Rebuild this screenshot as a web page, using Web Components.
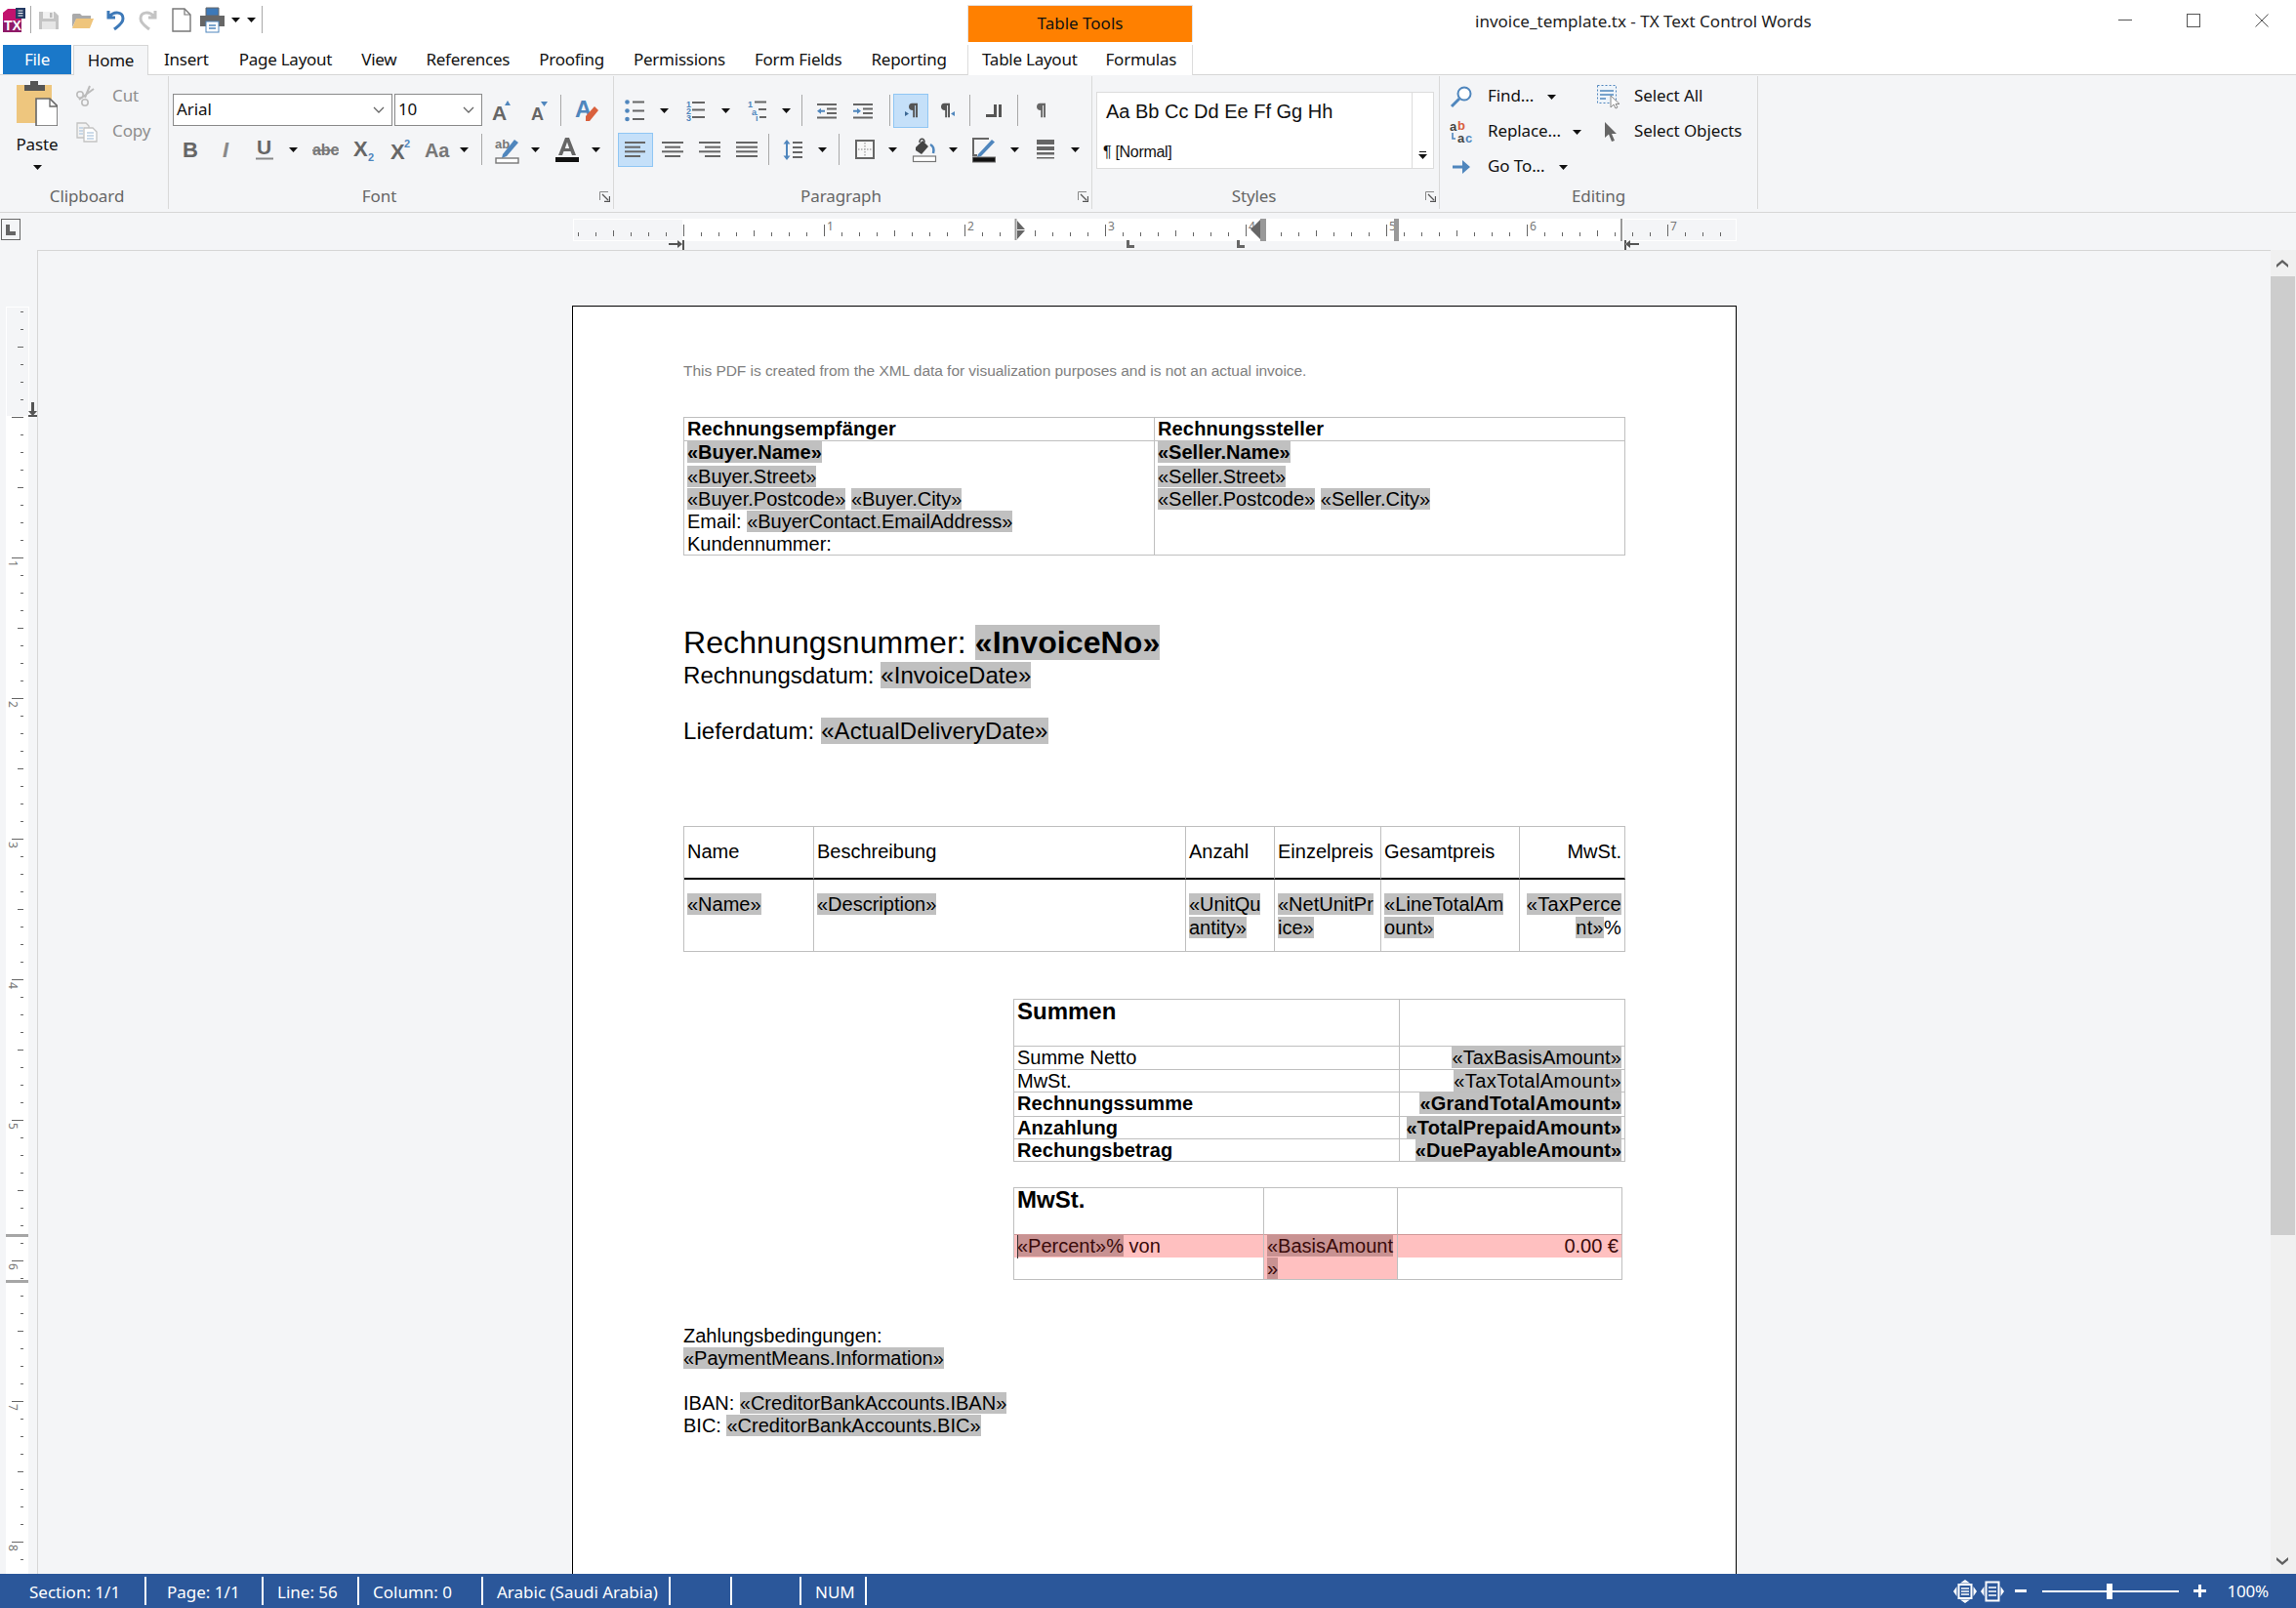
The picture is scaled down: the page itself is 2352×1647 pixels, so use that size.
<!DOCTYPE html>
<html lang="en"><head><meta charset="utf-8"><title>invoice_template.tx - TX Text Control Words</title>
<style>html,body{margin:0;padding:0;background:#f4f5f7;overflow:hidden}</style></head>
<body>
<tx-app>
  <tx-titlebar>
    <tx-btn w="29" i="logo"></tx-btn><tx-sep w="4" h="28"></tx-sep>
    <tx-btn w="34" i="save"></tx-btn><tx-btn w="36" i="open"></tx-btn><tx-btn w="30" i="undo"></tx-btn><tx-btn w="38" i="redo"></tx-btn><tx-btn w="30" i="newdoc"></tx-btn><tx-btn w="33" i="print"></tx-btn><tx-btn w="14" i="caret"></tx-btn><tx-btn w="18" i="caret"></tx-btn><tx-sep w="4" h="28"></tx-sep>
  </tx-titlebar>
  <tx-tabs>
    <tx-row w="991" style="align-items:flex-start">
    <tx-tab kind="file" w="70" ml="3">File</tx-tab><tx-tab kind="active" w="77" ml="2">Home</tx-tab>
    <tx-tab pad="16">Insert</tx-tab><tx-tab pad="15">Page Layout</tx-tab><tx-tab pad="15">View</tx-tab><tx-tab pad="15">References</tx-tab><tx-tab pad="15">Proofing</tx-tab><tx-tab pad="15">Permissions</tx-tab><tx-tab pad="15">Form Fields</tx-tab><tx-tab pad="15">Reporting</tx-tab>
    </tx-row>
    <tx-context><tx-tab pad="14">Table Layout</tx-tab><tx-tab pad="15">Formulas</tx-tab></tx-context>
  </tx-tabs>
  <tx-ribbon>
    <tx-group w="173" label="Clipboard" lpl="6">
      <tx-row style="align-items:flex-start">
        <tx-paste></tx-paste>
        <tx-col top="3">
          <tx-row h="36"><tx-btn w="26" i="cut"></tx-btn><tx-label pl="13" muted>Cut</tx-label></tx-row>
          <tx-row h="36"><tx-btn w="26" i="copy"></tx-btn><tx-label pl="13" muted>Copy</tx-label></tx-row>
        </tx-col>
      </tx-row>
    </tx-group>
    <tx-group w="456" label="Font" launcher>
      <tx-col top="15">
        <tx-row h="40"><tx-combo w="225" ml="4">Arial</tx-combo><tx-combo w="90" ml="2">10</tx-combo><tx-btn w="40" i="grow"></tx-btn><tx-btn w="38" i="shrink"></tx-btn><tx-sep w="4"></tx-sep><tx-btn w="50" i="clearfmt"></tx-btn></tx-row>
        <tx-row h="40"><tx-btn w="44" i="bold"></tx-btn><tx-btn w="30" i="italic"></tx-btn><tx-btn w="48" i="under"></tx-btn><tx-btn w="10" i="caret"></tx-btn><tx-btn w="56" i="strike"></tx-btn><tx-btn w="24" i="sub"></tx-btn><tx-btn w="50" i="sup"></tx-btn><tx-btn w="24" i="case"></tx-btn><tx-btn w="32" i="caret"></tx-btn><tx-sep w="4"></tx-sep><tx-gap w="8"></tx-gap><tx-btn w="32" i="hilite"></tx-btn><tx-btn w="26" i="caret"></tx-btn><tx-btn w="40" i="fcolor"></tx-btn><tx-btn w="18" i="caret"></tx-btn></tx-row>
      </tx-col>
    </tx-group>
    <tx-group w="490" label="Paragraph" launcher>
      <tx-col top="15">
        <tx-row h="40"><tx-btn w="42" i="bullets"></tx-btn><tx-btn w="18" i="caret"></tx-btn><tx-btn w="47" i="numbers"></tx-btn><tx-btn w="14" i="caret"></tx-btn><tx-btn w="50" i="multi"></tx-btn><tx-btn w="10" i="caret"></tx-btn><tx-sep w="23"></tx-sep><tx-btn w="28" i="outdent"></tx-btn><tx-btn w="46" i="indent"></tx-btn><tx-sep w="8"></tx-sep><tx-btn w="36" i="ltr" pressed></tx-btn><tx-btn w="40" i="rtl"></tx-btn><tx-sep w="4"></tx-sep><tx-btn w="46" i="tcol"></tx-btn><tx-sep w="2"></tx-sep><tx-btn w="48" i="pil"></tx-btn></tx-row>
        <tx-row h="40"><tx-gap w="4"></tx-gap><tx-btn w="36" i="aleft" pressed></tx-btn><tx-btn w="40" i="acenter"></tx-btn><tx-btn w="36" i="aright"></tx-btn><tx-btn w="40" i="ajust"></tx-btn><tx-sep w="4"></tx-sep><tx-btn w="47" i="spacing"></tx-btn><tx-btn w="12" i="caret"></tx-btn><tx-sep w="22"></tx-sep><tx-btn w="32" i="borders"></tx-btn><tx-btn w="24" i="caret"></tx-btn><tx-btn w="42" i="paint"></tx-btn><tx-btn w="16" i="caret"></tx-btn><tx-btn w="48" i="pen"></tx-btn><tx-btn w="14" i="caret"></tx-btn><tx-btn w="50" i="shade"></tx-btn><tx-btn w="10" i="caret"></tx-btn></tx-row>
      </tx-col>
    </tx-group>
    <tx-group w="356" label="Styles" launcher>
      <tx-styles></tx-styles>
    </tx-group>
    <tx-group w="326" label="Editing">
      <tx-col top="3" left="2">
        <tx-row h="36"><tx-btn w="40" i="find"></tx-btn><tx-label pl="7" w="55">Find...</tx-label><tx-btn w="34" i="caret"></tx-btn><tx-gap w="21"></tx-gap><tx-btn w="40" i="selall"></tx-btn><tx-label pl="7">Select All</tx-label></tx-row>
        <tx-row h="36"><tx-btn w="40" i="replace"></tx-btn><tx-label pl="7" w="81">Replace...</tx-label><tx-btn w="34" i="caret"></tx-btn><tx-btn w="35" i="pointer"></tx-btn><tx-label pl="7">Select Objects</tx-label></tx-row>
        <tx-row h="36"><tx-btn w="40" i="goto"></tx-btn><tx-label pl="7" w="67">Go To...</tx-label><tx-btn w="34" i="caret"></tx-btn></tx-row>
      </tx-col>
    </tx-group>
  </tx-ribbon>
  <tx-hruler></tx-hruler>
  <tx-editor>
    <tx-vruler slot="ruler"></tx-vruler>
    <tx-page>
      <tx-p color="#808080" fs="15.5" ls="-0.04">This PDF is created from the XML data for visualization purposes and is not an actual invoice.</tx-p>
      <tx-table top="36" cols="482 482" rows="24 117">
        <tx-cell b ls="0.15">Rechnungsempfänger</tx-cell><tx-cell b ls="0.15">Rechnungssteller</tx-cell>
        <tx-cell><tx-ln h="25"><b><tx-field>«Buyer.Name»</tx-field></b></tx-ln><tx-field>«Buyer.Street»</tx-field><br><tx-field>«Buyer.Postcode»</tx-field> <tx-field>«Buyer.City»</tx-field><br>Email: <tx-field>«BuyerContact.EmailAddress»</tx-field><br>Kundennummer:</tx-cell>
        <tx-cell><tx-ln h="25"><b><tx-field>«Seller.Name»</tx-field></b></tx-ln><tx-field>«Seller.Street»</tx-field><br><tx-field>«Seller.Postcode»</tx-field> <tx-field>«Seller.City»</tx-field></tx-cell>
      </tx-table>
      <tx-p top="71" fs="32" lh="37" ls="0.1">Rechnungsnummer: <b><tx-field>«InvoiceNo»</tx-field></b></tx-p>
      <tx-p top="1" fs="24" lh="28" ls="0.05">Rechnungsdatum: <tx-field>«InvoiceDate»</tx-field></tx-p>
      <tx-p top="29" fs="24" lh="28" ls="0.08">Lieferdatum: <tx-field>«ActualDeliveryDate»</tx-field></tx-p>
      <tx-table top="83" cols="133 381 91 109 142 108" rows="54 74">
        <tx-cell heavy pt="14">Name</tx-cell><tx-cell heavy pt="14">Beschreibung</tx-cell><tx-cell heavy pt="14">Anzahl</tx-cell><tx-cell heavy pt="14">Einzelpreis</tx-cell><tx-cell heavy pt="14">Gesamtpreis</tx-cell><tx-cell heavy pt="14" right>MwSt.</tx-cell>
        <tx-cell pt="14"><tx-field>«Name»</tx-field></tx-cell><tx-cell pt="14"><tx-field>«Description»</tx-field></tx-cell><tx-cell pt="13" lh="24"><tx-field>«UnitQu</tx-field><br><tx-field>antity»</tx-field></tx-cell><tx-cell pt="13" lh="24"><tx-field>«NetUnitPr</tx-field><br><tx-field>ice»</tx-field></tx-cell><tx-cell pt="13" lh="24" ls="0.1"><tx-field>«LineTotalAm</tx-field><br><tx-field>ount»</tx-field></tx-cell><tx-cell pt="13" lh="24" right ls="0.3"><tx-field>«TaxPerce</tx-field><br><tx-field>nt»</tx-field>%</tx-cell>
      </tx-table>
      <tx-table top="48" ml="338" cols="395 231" rows="48 24 23 25 23 23">
        <tx-cell><b style="font-size:24px">Summen</b></tx-cell><tx-cell></tx-cell>
        <tx-cell>Summe Netto</tx-cell><tx-cell right ls="0.15"><tx-field>«TaxBasisAmount»</tx-field></tx-cell>
        <tx-cell>MwSt.</tx-cell><tx-cell right ls="0.45"><tx-field>«TaxTotalAmount»</tx-field></tx-cell>
        <tx-cell b ls="0.1">Rechnungssumme</tx-cell><tx-cell right b ls="0.2"><tx-field>«GrandTotalAmount»</tx-field></tx-cell>
        <tx-cell b ls="0.1">Anzahlung</tx-cell><tx-cell right b ls="0.15"><tx-field>«TotalPrepaidAmount»</tx-field></tx-cell>
        <tx-cell b ls="0.1">Rechungsbetrag</tx-cell><tx-cell right b><tx-field>«DuePayableAmount»</tx-field></tx-cell>
      </tx-table>
      <tx-table top="26" ml="338" cols="256 137 230" rows="48 46">
        <tx-cell><b style="font-size:24px">MwSt.</b></tx-cell><tx-cell></tx-cell><tx-cell></tx-cell>
        <tx-cell red><tx-redline cursor><tx-field dark>«Percent»%</tx-field> von</tx-redline></tx-cell>
        <tx-cell red full><tx-field dark>«BasisAmount</tx-field><br><tx-field dark>»</tx-field></tx-cell>
        <tx-cell red><tx-redline right>0.00 €</tx-redline></tx-cell>
      </tx-table>
      <tx-p top="46">Zahlungsbedingungen:</tx-p>
      <tx-p><tx-field>«PaymentMeans.Information»</tx-field></tx-p>
      <tx-p top="23">IBAN: <tx-field>«CreditorBankAccounts.IBAN»</tx-field></tx-p>
      <tx-p>BIC: <tx-field>«CreditorBankAccounts.BIC»</tx-field></tx-p>
    </tx-page>
    <tx-scroll slot="scroll"></tx-scroll>
  </tx-editor>
  <tx-status>
    <tx-sitem w="150" pl="30">Section: 1/1</tx-sitem><tx-sitem w="120" pl="21">Page: 1/1</tx-sitem><tx-sitem w="98" pl="14">Line: 56</tx-sitem><tx-sitem w="127" pl="14">Column: 0</tx-sitem><tx-sitem w="192" pl="14">Arabic (Saudi Arabia)</tx-sitem><tx-sitem w="63"></tx-sitem><tx-sitem w="71"></tx-sitem><tx-sitem w="67" pl="14">NUM</tx-sitem>
    <tx-zoombar></tx-zoombar>
  </tx-status>
</tx-app>
<script>
const g='#666',bl='#4f86bd',F='font-family="Liberation Sans,sans-serif"';
const ln=(a,c=g,s=2)=>a.map(([x1,x2,y])=>`<path d="M${x1} ${y}H${x2}" stroke="${c}" stroke-width="${s}" fill="none"/>`).join('');
const pilPath=(c)=>`<path d="M5 1H14V21H11V4H9.500V21H6.500V11C2 11 0 9 0 6S2 1 5 1Z" fill="${c}"/>`;
const pilS=(x,y,w,h,c='#555')=>`<svg x="${x}" y="${y}" width="${w}" height="${h}" viewBox="0 0 14 22" preserveAspectRatio="none">${pilPath(c)}</svg>`;
const I={
caret:[9,5,'<path d="M0 0h9L4.5 5z" fill="#111"/>'],
logo:[24,25,`<path d="M0 5L5 1H19V25H0Z" fill="#c2136e"/><path d="M0 13H19V25H0Z" fill="#8f1a68"/><rect x="13" y="0" width="10" height="11" fill="#243a63"/><path d="M15.500 3h5M15.500 5.500h5M15.500 8h5" stroke="#fff" stroke-width="1.100"/><text x="1" y="23" font-size="14" font-weight="700" fill="#fff" ${F}>TX</text>`],
save:[20,19,'<path d="M0 1H16L20 5V19H0Z" fill="#c4c4c4"/><rect x="4" y="1" width="11" height="7" fill="#f1f1f1"/><rect x="3" y="11" width="14" height="8" fill="#e6e6e6"/><rect x="11" y="2" width="2.500" height="5" fill="#bbb"/>'],
open:[22,17,'<path d="M1 2H8L10 4H19V8H4L0 16V3Z" fill="#aaa"/><path d="M4 7H22L18 17H0Z" fill="#efc57c"/>'],
undo:[20,22,'<path d="M3 2V9H10M4 8C9 2 18 3 18 10C18 15 13 18 9 21" fill="none" stroke="#3d79b8" stroke-width="3"/>'],
redo:[20,22,'<path d="M17 2V9H10M16 8C11 2 2 3 2 10C2 15 7 18 11 21" fill="none" stroke="#c4c4c4" stroke-width="3"/>'],
newdoc:[20,25,'<path d="M1 1H13L19 7V24H1Z" fill="#fff" stroke="#777" stroke-width="1.400"/><path d="M13 1V7H19" fill="none" stroke="#777" stroke-width="1.200"/>'],
print:[25,26,`<path d="M6 1H19V9H6Z" fill="#3d79b8" stroke="#666"/><rect x="0" y="9" width="25" height="11" fill="#666"/><rect x="6" y="15" width="13" height="11" fill="#fff" stroke="#4f86bd"/><path d="M9 19h7M9 22h7" stroke="#4f86bd" stroke-width="1.500"/>`],
cut:[22,22,'<path d="M14 0L9 12M18 3L3 14" stroke="#bbb" stroke-width="2" fill="none"/><circle cx="4" cy="9" r="3.200" fill="none" stroke="#bbb" stroke-width="1.600"/><circle cx="9" cy="17" r="3.200" fill="none" stroke="#bbb" stroke-width="1.600"/>'],
copy:[22,21,'<path d="M1 1H10L13 4V16H1Z" fill="#f3f3f3" stroke="#c2c2c2" stroke-width="1.300"/><path d="M8 6H17L21 10V20H8Z" fill="#fff" stroke="#c2c2c2" stroke-width="1.300"/><path d="M11 11h7M11 14h7M11 17h7M3 6h4M3 9h4M3 12h4" stroke="#bcd0e4" stroke-width="1.300"/>'],
paste:[42,46,'<rect x="0" y="4" width="36" height="39" fill="#eec67e"/><path d="M8 4H14V0H22V4H29V10H8Z" fill="#555"/><path d="M20 18H34L42 26V46H20Z" fill="#fff" stroke="#666" stroke-width="1.600"/><path d="M34 18V26H42" fill="none" stroke="#666" stroke-width="1.300"/>'],
grow:[20,20,`<text x="0" y="20" font-size="21" font-weight="700" fill="#666" ${F}>A</text><path d="M13 5L16 0L19 5Z" fill="${bl}"/>`],
shrink:[18,20,`<text x="0" y="20" font-size="18" font-weight="700" fill="#666" ${F}>A</text><path d="M10 1H17L13.500 6Z" fill="${bl}"/>`],
clearfmt:[24,26,`<text x="0" y="20" font-size="24" font-weight="700" fill="#4f86bd" ${F}>A</text><path d="M11 19L20 9L24 13L15 24H11Z" fill="#d9603d"/>`],
bold:[16,18,`<text x="0" y="17" font-size="22" font-weight="700" fill="#666" ${F}>B</text>`],
italic:[9,18,`<text x="0" y="17" font-size="22" font-weight="700" font-style="italic" fill="#888" ${F}>I</text>`],
under:[18,22,`<text x="1" y="16" font-size="21" font-weight="700" fill="#666" ${F}>U</text><path d="M0 20.500H18" stroke="#888" stroke-width="2"/>`],
strike:[27,14,`<text x="0" y="13" font-size="16" font-weight="700" fill="#777" ${F}>abc</text><path d="M0 8H27" stroke="#777" stroke-width="1.600"/>`],
sub:[22,24,`<text x="0" y="19" font-size="22" font-weight="700" fill="#666" ${F}>X</text><text x="15" y="24" font-size="11" font-weight="700" fill="${bl}" ${F}>2</text>`],
sup:[20,22,`<text x="0" y="21" font-size="22" font-weight="700" fill="#666" ${F}>X</text><text x="14" y="9" font-size="11" font-weight="700" fill="${bl}" ${F}>2</text>`],
case:[24,16,`<text x="0" y="16" font-size="20" font-weight="700" fill="#777" ${F}>Aa</text>`],
hilite:[25,28,`<text x="0" y="13" font-size="13" font-weight="700" fill="#777" ${F}>ab</text><path d="M8 19L20 4L24 7L12 21L7 23Z" fill="#4f86bd"/><rect x="1" y="23" width="23" height="5" fill="#fff" stroke="#777" stroke-width="1.400"/>`],
fcolor:[24,26,`<path d="M3 19L10 1H14L21 19H17L15.500 15H8.500L7 19ZM9.800 12H14.200L12 5.500Z" fill="#666"/><rect x="0" y="21" width="24" height="5" fill="#111"/>`],
bullets:[20,22,`<circle cx="2.500" cy="2.500" r="2.300" fill="${bl}"/><circle cx="2.500" cy="11.500" r="2.300" fill="${bl}"/><circle cx="2.500" cy="20" r="2.300" fill="${bl}"/>`+ln([[8,20,2.5],[8,20,11.5],[8,20,20]])],
numbers:[19,22,`<text x="0" y="8" font-size="9" font-weight="700" fill="${bl}" ${F}>1</text><text x="0" y="15" font-size="9" font-weight="700" fill="${bl}" ${F}>2</text><text x="0" y="22" font-size="9" font-weight="700" fill="${bl}" ${F}>3</text>`+ln([[6,19,3],[6,19,10.5],[6,19,18]])],
multi:[19,22,`<text x="0" y="8" font-size="9" font-weight="700" fill="${bl}" ${F}>1</text><text x="4" y="15.500" font-size="9" font-weight="700" fill="${bl}" ${F}>a</text><text x="8" y="22" font-size="9" font-weight="700" fill="${bl}" ${F}>i</text>`+ln([[7,19,2.5],[11,19,10],[12,19,18]])],
outdent:[20,15,ln([[0,20,1],[10,20,5.5],[10,20,10],[0,20,14.5]])+`<path d="M0 7.700L4 4.700V6.700H8V8.700H4V10.700Z" fill="${bl}"/>`],
indent:[20,15,ln([[0,20,1],[10,20,5.5],[10,20,10],[0,20,14.5]])+`<path d="M8 7.700L4 4.700V6.700H0V8.700H4V10.700Z" fill="${bl}"/>`],
ltr:[13,16,pilS(4,0,9,16)+'<path d="M0 9L4 11.500L0 14Z" fill="#3c6894"/>'],
rtl:[14,16,pilS(0,0,9,16)+`<path d="M14 9V14L10 11.500Z" fill="${bl}"/>`],
tcol:[16,13,'<path d="M0 10H8V0H11V13H0ZM13 0H16V13H13Z" fill="#555"/>'],
pil:[10,16,pilS(0,0,9,16,'#666')],
aleft:[22,16,ln([[0,21,1],[0,16,5.7],[0,21,10.3],[0,16,15]])],
acenter:[22,16,ln([[0,22,1],[3,19,5.7],[0,22,10.3],[3,19,15]])],
aright:[22,16,ln([[0,22,1],[6,22,5.7],[0,22,10.3],[6,22,15]])],
ajust:[22,16,ln([[0,22,1],[0,22,5.7],[0,22,10.3],[0,22,15]])],
spacing:[19,21,`<path d="M3 0L6.500 4.500H4V16.500H6.500L3 21L-.5 16.500H2V4.500H-.5Z" fill="${bl}"/>`+ln([[9,19,3],[9,19,8],[9,19,13],[9,19,18]])],
borders:[20,20,'<rect x="1" y="1" width="18" height="18" fill="#f8f8f8" stroke="#666" stroke-width="2"/><path d="M10 3v14M3 10h14" stroke="#aaa" stroke-width="1.500" stroke-dasharray="1.500 1.500"/>'],
paint:[24,26,`<path d="M3 11L10 4L16 10L9 18L3 14Z" fill="#444"/><path d="M7 6C7 1 12 1 12 6" fill="none" stroke="#444" stroke-width="1.500"/><path d="M18 8C22 10 22 13 21 17" fill="none" stroke="${bl}" stroke-width="2.500"/><rect x=".5" y="20" width="23" height="5.500" fill="#fff" stroke="#777" stroke-width="1.200"/>`],
pen:[24,26,`<path d="M17 2H1V19H5" fill="none" stroke="#666" stroke-width="2"/><path d="M6 18L20 3L23 5.500L9 20L5 21Z" fill="#4f86bd"/><rect x=".5" y="21" width="23" height="5" fill="#111" stroke="#666"/>`],
shade:[18,20,'<rect width="18" height="5" fill="#666"/><rect y="7" width="18" height="4" fill="#666"/><rect y="13" width="18" height="2.500" fill="#666"/><rect y="18" width="18" height="1.500" fill="#666"/>'],
find:[22,22,`<circle cx="14" cy="8" r="6.500" fill="#fff" stroke="${bl}" stroke-width="2"/><path d="M9 13L1 21" stroke="${bl}" stroke-width="3"/>`],
selall:[22,25,`<rect x=".5" y=".5" width="19" height="18" fill="#eef4fa" stroke="${bl}" stroke-dasharray="2 2"/><path d="M3 6H17M3 10H17M3 14H9" stroke="${bl}" stroke-width="1.500"/><path d="M14 11V23L17 20L19 24L21 23L19 19.500H23Z" fill="#fff" stroke="#888"/>`],
replace:[24,24,`<text x="0" y="11" font-size="13" font-weight="700" fill="#444" ${F}>a</text><text x="8" y="10" font-size="13" font-weight="700" fill="#d9603d" ${F}>b</text><path d="M3 13V19H6" fill="none" stroke="${bl}" stroke-width="1.600"/><text x="8" y="23" font-size="13" font-weight="700" fill="#444" ${F}>a</text><text x="16" y="23" font-size="13" font-weight="700" fill="${bl}" ${F}>c</text>`],
pointer:[12,20,'<path d="M0 0V16L4 12.500L7 20L10 19L7 12H12Z" fill="#666"/>'],
goto:[18,14,`<path d="M0 5.500H10V0L18 7L10 14V8.500H0Z" fill="${bl}"/>`],
};
const def=(n,css,html)=>customElements.define(n,class extends HTMLElement{constructor(){super();this.attachShadow({mode:'open'})}
 connectedCallback(){this.shadowRoot.innerHTML=`<style>${css}</style>`+(typeof html==='function'?html(this):html);}});
const px=(el,a,p)=>{if(el.hasAttribute(a))el.style[p]=el.getAttribute(a)+'px'};

def('tx-app',`:host{display:flex;flex-direction:column;width:2352px;height:1647px;overflow:hidden;background:#f4f5f7;font:17px/1.2 "Noto Sans",sans-serif;letter-spacing:-.1px;color:#111}`,`<slot></slot>`);
def('tx-titlebar',`:host{display:grid;grid-template-columns:991px 231px 289px 1fr 210px;height:46px;background:#fff;letter-spacing:0}
.q{display:flex;align-items:center;height:40px}
.ctx{margin-top:5px;height:38px;background:#ff8000;border:1px solid #e3e3e3;border-bottom:0;box-sizing:border-box;display:flex;align-items:center;justify-content:center;color:#111}
.t{grid-column:4;padding-top:12px;color:#222;white-space:nowrap}
.w{display:flex}.w div{width:70px;height:42px;display:flex;align-items:center;justify-content:center}`,
`<div class="q"><slot></slot></div><div class="ctx">Table Tools</div><div class="t">invoice_template.tx - TX Text Control Words</div><div class="w"><div><svg width="14" height="2"><rect width="14" height="1" fill="#555"/></svg></div><div><svg width="14" height="14"><rect x=".5" y=".5" width="13" height="13" fill="none" stroke="#555"/></svg></div><div><svg width="14" height="14"><path d="M.5 .5L13.500 13.500M13.500 .5L.5 13.500" stroke="#555" fill="none"/></svg></div></div>`);
def('tx-tabs',`:host{display:flex;height:31px;background:#fff;box-sizing:border-box;border-bottom:1px solid #d6d6d6;align-items:stretch;white-space:nowrap;letter-spacing:-.25px}`,`<slot></slot>`);
def('tx-tab',`:host{display:flex;align-items:center;justify-content:center;box-sizing:border-box;height:30px;color:#111;flex:none}
:host([kind=file]){background:#1a78c9;color:#fff;height:30px}
:host([kind=active]){background:#f4f5f7;border:1px solid #d6d6d6;border-bottom:0;height:31px;padding-top:1px}`,
(e)=>{px(e,'w','width');px(e,'ml','marginLeft');if(e.hasAttribute('pad')){e.style.padding=`0 ${e.getAttribute('pad')}px`}return `<slot></slot>`});
def('tx-context',`:host{display:flex;width:231px;height:31px;box-sizing:border-box;background:#fff;border-left:1px solid #dcdcdc;border-right:1px solid #dcdcdc;flex:none}`,`<slot></slot>`);
def('tx-ribbon',`:host{display:flex;height:141px;box-sizing:border-box;border-bottom:1px solid #d6d6d6;background:#f4f5f7}`,`<slot></slot>`);
def('tx-group',`:host{display:flex;flex-direction:column;box-sizing:border-box;height:136px;margin-top:1px;border-right:1px solid #d9d9d9;flex:none}
.c{height:110px}.l{display:grid;grid-template-columns:1fr auto 1fr;height:26px;align-items:center;color:#666;box-sizing:border-box}
.l span{grid-column:2}.l svg{grid-column:3;justify-self:end;margin-right:3px}.l.la{padding-right:24px}.l.la svg{margin-right:-21px}`,
(e)=>{px(e,'w','width');const la=e.hasAttribute('launcher');const pl=e.getAttribute('lpl');return `<div class="c"><slot></slot></div><div class="l${la?' la':''}"${pl?` style="padding-left:${pl}px"`:''}><span>${e.getAttribute('label')}</span>${la?'<svg width="11" height="11"><path d="M.5 9V.5H9" fill="none" stroke="#888"/><path d="M3 3L9 9M10.500 5V10.500H5" fill="none" stroke="#555" stroke-width="1.300"/></svg>':''}</div>`});
def('tx-row',`:host{display:flex;align-items:center;flex:none}`,(e)=>{px(e,'h','height');px(e,'w','width');return `<slot></slot>`});
def('tx-col',`:host{display:flex;flex-direction:column;box-sizing:border-box}`,(e)=>{px(e,'top','paddingTop');px(e,'left','paddingLeft');return `<slot></slot>`});
def('tx-gap',`:host{display:block;flex:none}`,(e)=>{px(e,'w','width');return ''});
def('tx-btn',`:host{display:inline-flex;align-items:center;justify-content:center;flex:none;box-sizing:border-box}
:host([pressed]){background:#c5e0f9;border:1px solid #90c6f4;height:35px}svg{flex:none;overflow:visible;display:block}`,
(e)=>{px(e,'w','width');const [w,h,s]=I[e.getAttribute('i')];return `<svg width="${w}" height="${h}" viewBox="0 0 ${w} ${h}">${s}</svg>`});
def('tx-sep',`:host{display:inline-flex;justify-content:center;flex:none}i{display:block;width:1px;background:#a8a8a8}`,
(e)=>{px(e,'w','width');return `<i style="height:${e.getAttribute('h')||32}px"></i>`});
def('tx-label',`:host{display:block;flex:none;box-sizing:border-box;white-space:nowrap;color:#111;margin-top:-2px}:host([muted]){color:#8e8e8e}`,
(e)=>{px(e,'w','width');px(e,'pl','paddingLeft');return `<slot></slot>`});
def('tx-combo',`:host{display:flex;align-items:center;flex:none;box-sizing:border-box;height:33px;background:#fff;border:1px solid #8a8a8a;padding-left:3px;justify-content:space-between;margin-top:-2px}
svg{margin-right:7px}`,(e)=>{px(e,'w','width');px(e,'ml','marginLeft');return `<span><slot></slot></span><svg width="12" height="7"><path d="M1 1L6 6L11 1" fill="none" stroke="#666" stroke-width="1.300"/></svg>`});
def('tx-paste',`:host{display:flex;flex-direction:column;align-items:center;width:76px;flex:none;padding-top:5px}
svg{display:block}span{margin-top:7px;height:23px;line-height:23px}i{display:block;margin-top:10px;height:5px}`,
`<svg width="42" height="46" viewBox="0 0 42 46">${I.paste[2]}</svg><span>Paste</span><i><svg width="9" height="5">${I.caret[2]}</svg></i>`);
def('tx-styles',`:host{display:grid;grid-template-columns:1fr 22px;margin:16px 5px 0 4px;height:79px;box-sizing:border-box;background:#fff;border:1px solid #dcdcdc}
.m{padding:7px 0 0 9px;font:20px/24px "Liberation Sans",sans-serif;color:#111;letter-spacing:0}
.n{font-size:16px;line-height:20px;margin:20px 0 0 -3px;letter-spacing:-.3px}
.a{border-left:1px solid #dcdcdc;display:flex;flex-direction:column;align-items:center;justify-content:flex-end;padding-bottom:8px}`,
`<div class="m">Aa Bb Cc Dd Ee Ff Gg Hh<div class="n">¶ [Normal]</div></div><div class="a"><svg width="9" height="9"><path d="M1 .5H8" stroke="#111"/><path d="M0 3H9L4.500 8Z" fill="#111"/></svg></div>`);
def('tx-hruler',`:host{display:flex;height:38px;flex:none;align-items:flex-start}
.l{width:20px;height:22px;box-sizing:border-box;margin:6px 0 0 1px;border:1px solid #666;flex:none;display:flex;align-items:center;justify-content:center}
svg{display:block;flex:none}.r{margin-top:1px}`,()=>{
 let s=`<rect x="587.500" y="5.500" width="112" height="22" fill="none" stroke="#fff"/><rect x="699" y="5" width="961" height="23" fill="#fff"/><rect x="1662.500" y="5.500" width="116" height="22" fill="none" stroke="#fff"/>`;
 for(let x=592;x<1775;x+=18){const n=(x-700)/18;const top=n%8===0?11:n%4===0?17:19;s+=`<path d="M${x+.5} ${top}V23" stroke="#666"/>`;
  if(n%8===0&&n>0)s+=`<text x="${x+3}" y="17" font-size="12" fill="#777" font-family="Noto Sans,sans-serif">${n/8}</text>`;}
 s+=`<path d="M685 30h9v-3l5 4-5 4v-3h-9zM699 27h2v10h-2z" fill="#555"/><path d="M1679 30h-9v-3l-5 4 5 4v-3h9zM1664 27h2v10h-2z" fill="#555"/>`;
 s+=`<path d="M1154 27h3v5h5v3h-8zM1267 27h3v5h5v3h-8z" fill="#666"/>`;
 s+=`<rect x="1039.500" y="5" width="2" height="22" fill="#999"/><path d="M1042 7l8 9h-8zM1042 17h8l-8 9z" fill="#666"/>`;
 s+=`<path d="M1291 6v20l-10-10z" fill="#666"/><rect x="1291" y="5" width="6" height="23" fill="#999"/><rect x="1428" y="5" width="5" height="23" fill="#999"/><rect x="1660" y="5" width="2" height="23" fill="#999"/>`;
 return `<div class="l"><svg width="10" height="11"><path d="M0 0h4v7h6v4H0z" fill="#666"/></svg></div><svg class="r" width="2331" height="37" viewBox="21 0 2331 37">${s}</svg>`;});
def('tx-editor',`:host{display:grid;grid-template-columns:38px 1fr 26px;height:1356px;flex:none;overflow:hidden}
.d{border-top:1px solid #d6d6d6;border-left:1px solid #d6d6d6;overflow:hidden;min-width:0}`,`<slot name="ruler"></slot><div class="d"><slot></slot></div><slot name="scroll"></slot>`);
def('tx-vruler',`:host{display:block;width:38px;height:1356px}svg{display:block}`,()=>{
 let s=`<rect x="6.500" y="58.500" width="23" height="112" fill="none" stroke="#fff"/><rect x="6" y="170" width="23" height="1190" fill="#fff"/>`;
 for(let y=319;y<1612;y+=18){const n=(y-427)/18;const L=n%8===0?12:n%4===0?18:21;s+=`<path d="M${L} ${y-256+.5}H24" stroke="#666"/>`;
  if(n%8===0&&n>0)s+=`<text transform="translate(9 ${y-256+3}) rotate(90)" font-size="12" fill="#777" font-family="Noto Sans,sans-serif">${n/8}</text>`;}
 s+=`<path d="M32 156h3v9h3l-4.500 5-4.500-5h3zM29 169h9v2h-9z" fill="#555"/><rect x="6" y="1008" width="23" height="3" fill="#a6a6a6"/><rect x="6" y="1055" width="23" height="3" fill="#a6a6a6"/>`;
 return `<svg width="38" height="1356" viewBox="0 0 38 1356">${s}</svg>`;});
def('tx-page',`:host{display:block;box-sizing:border-box;width:1193px;height:1500px;margin:56px 0 0 547px;background:#fff;border:1px solid #000;padding:54px 0 0 113px;font:20px/23px "Liberation Sans",sans-serif;letter-spacing:0;color:#000}`,`<slot></slot>`);
def('tx-p',`:host{display:block;white-space:nowrap}`,(e)=>{px(e,'top','marginTop');px(e,'fs','fontSize');px(e,'lh','lineHeight');px(e,'ls','letterSpacing');if(e.hasAttribute('color'))e.style.color=e.getAttribute('color');return `<slot></slot>`});
def('tx-ln',`:host{display:block}`,(e)=>{px(e,'h','height');return `<slot></slot>`});
def('tx-field',`:host{display:inline;background:#c0c0c0}:host([dark]){background:#c89292}`,`<slot></slot>`);
def('tx-table',`:host{display:grid;width:max-content;border-left:1px solid #bfbfbf;border-top:1px solid #bfbfbf}`,(e)=>{px(e,'top','marginTop');px(e,'ml','marginLeft');
 e.style.gridTemplateColumns=e.getAttribute('cols').split(' ').map(v=>v+'px').join(' ');e.style.gridTemplateRows=e.getAttribute('rows').split(' ').map(v=>v+'px').join(' ');return `<slot></slot>`});
def('tx-cell',`:host{display:block;box-sizing:border-box;padding:0 3px;border-right:1px solid #bfbfbf;border-bottom:1px solid #bfbfbf;white-space:nowrap}
:host([right]){text-align:right}:host([b]){font-weight:700}:host([heavy]){border-bottom:2px solid #000}
:host([red]){color:#3a0a0a;border-top:1px solid #d09a9a;padding:0;margin-top:-1px}
:host([full]){background:#ffc0c0;padding:0 0 0 3px}`,(e)=>{px(e,'pt','paddingTop');px(e,'lh','lineHeight');px(e,'ls','letterSpacing');return `<slot></slot>`});
def('tx-redline',`:host{display:block;height:23px;background:#ffc0c0;padding:0 3px;position:relative}:host([right]){text-align:right}
:host([cursor])::before{content:"";position:absolute;left:3px;top:0;width:1px;height:24px;background:#333}`,`<slot></slot>`);
def('tx-scroll',`:host{display:flex;flex-direction:column;width:26px;height:1356px;background:#f0f0f0;box-sizing:border-box;padding-right:1.500px}
.a{height:27px;display:flex;align-items:center;justify-content:center;flex:none}.t{height:982px;background:#cdcdcd;flex:none}.s{flex:1}`,
`<div class="a"><svg width="12" height="8"><path d="M0 8V5L6 0L12 5V8L6 3Z" fill="#606060"/></svg></div><div class="t"></div><div class="s"></div><div class="a"><svg width="12" height="8"><path d="M0 0V3L6 8L12 3V0L6 5Z" fill="#606060"/></svg></div>`);
def('tx-status',`:host{display:flex;align-items:center;height:35px;flex:none;background:#2b579a;color:#fff;white-space:nowrap;letter-spacing:0}`,`<slot></slot>`);
def('tx-sitem',`:host{display:flex;align-items:center;box-sizing:border-box;height:29px;border-right:2px solid #fff;flex:none;padding-top:3px}`,(e)=>{px(e,'w','width');px(e,'pl','paddingLeft');return `<slot></slot>`});
def('tx-zoombar',`:host{display:flex;align-items:center;margin-left:auto;height:35px;flex:none;padding-right:28px}
svg{display:block;flex:none}.s{position:relative;width:140px;height:2px;background:#fff;margin:0 15px 0 16px}.s i{position:absolute;left:66px;top:-7px;width:6px;height:16px;background:#fff}span{letter-spacing:-.2px;padding-top:2px}`,
`<svg width="24" height="24" style="margin-right:4px"><path d="M12 0l5 3.500H7zM12 24l5-3.500H7zM0 12l3.500-5v10zM24 12l-3.500-5v10z" fill="#fff"/><rect x="5.500" y="5" width="13" height="14" fill="#2b579a" stroke="#fff" stroke-width="2"/><path d="M8 9h8M8 12h8M8 15h8" stroke="#fff" stroke-width="1.500"/></svg>
<svg width="24" height="24" style="margin-right:11px"><path d="M0 12l3.500-5v10zM24 12l-3.500-5v10z" fill="#fff"/><rect x="5.500" y="2.500" width="13" height="19" fill="#2b579a" stroke="#fff" stroke-width="2"/><path d="M8 8h8M8 12h8M8 16h8" stroke="#fff" stroke-width="1.500"/></svg>
<svg width="12" height="3"><rect width="12" height="3" fill="#fff"/></svg><div class="s"><i></i></div>
<svg width="13" height="13" style="margin-right:22px"><path d="M5 0h3v5h5v3H8v5H5V8H0V5h5z" fill="#fff"/></svg><span>100%</span>`);
</script>
</body></html>
